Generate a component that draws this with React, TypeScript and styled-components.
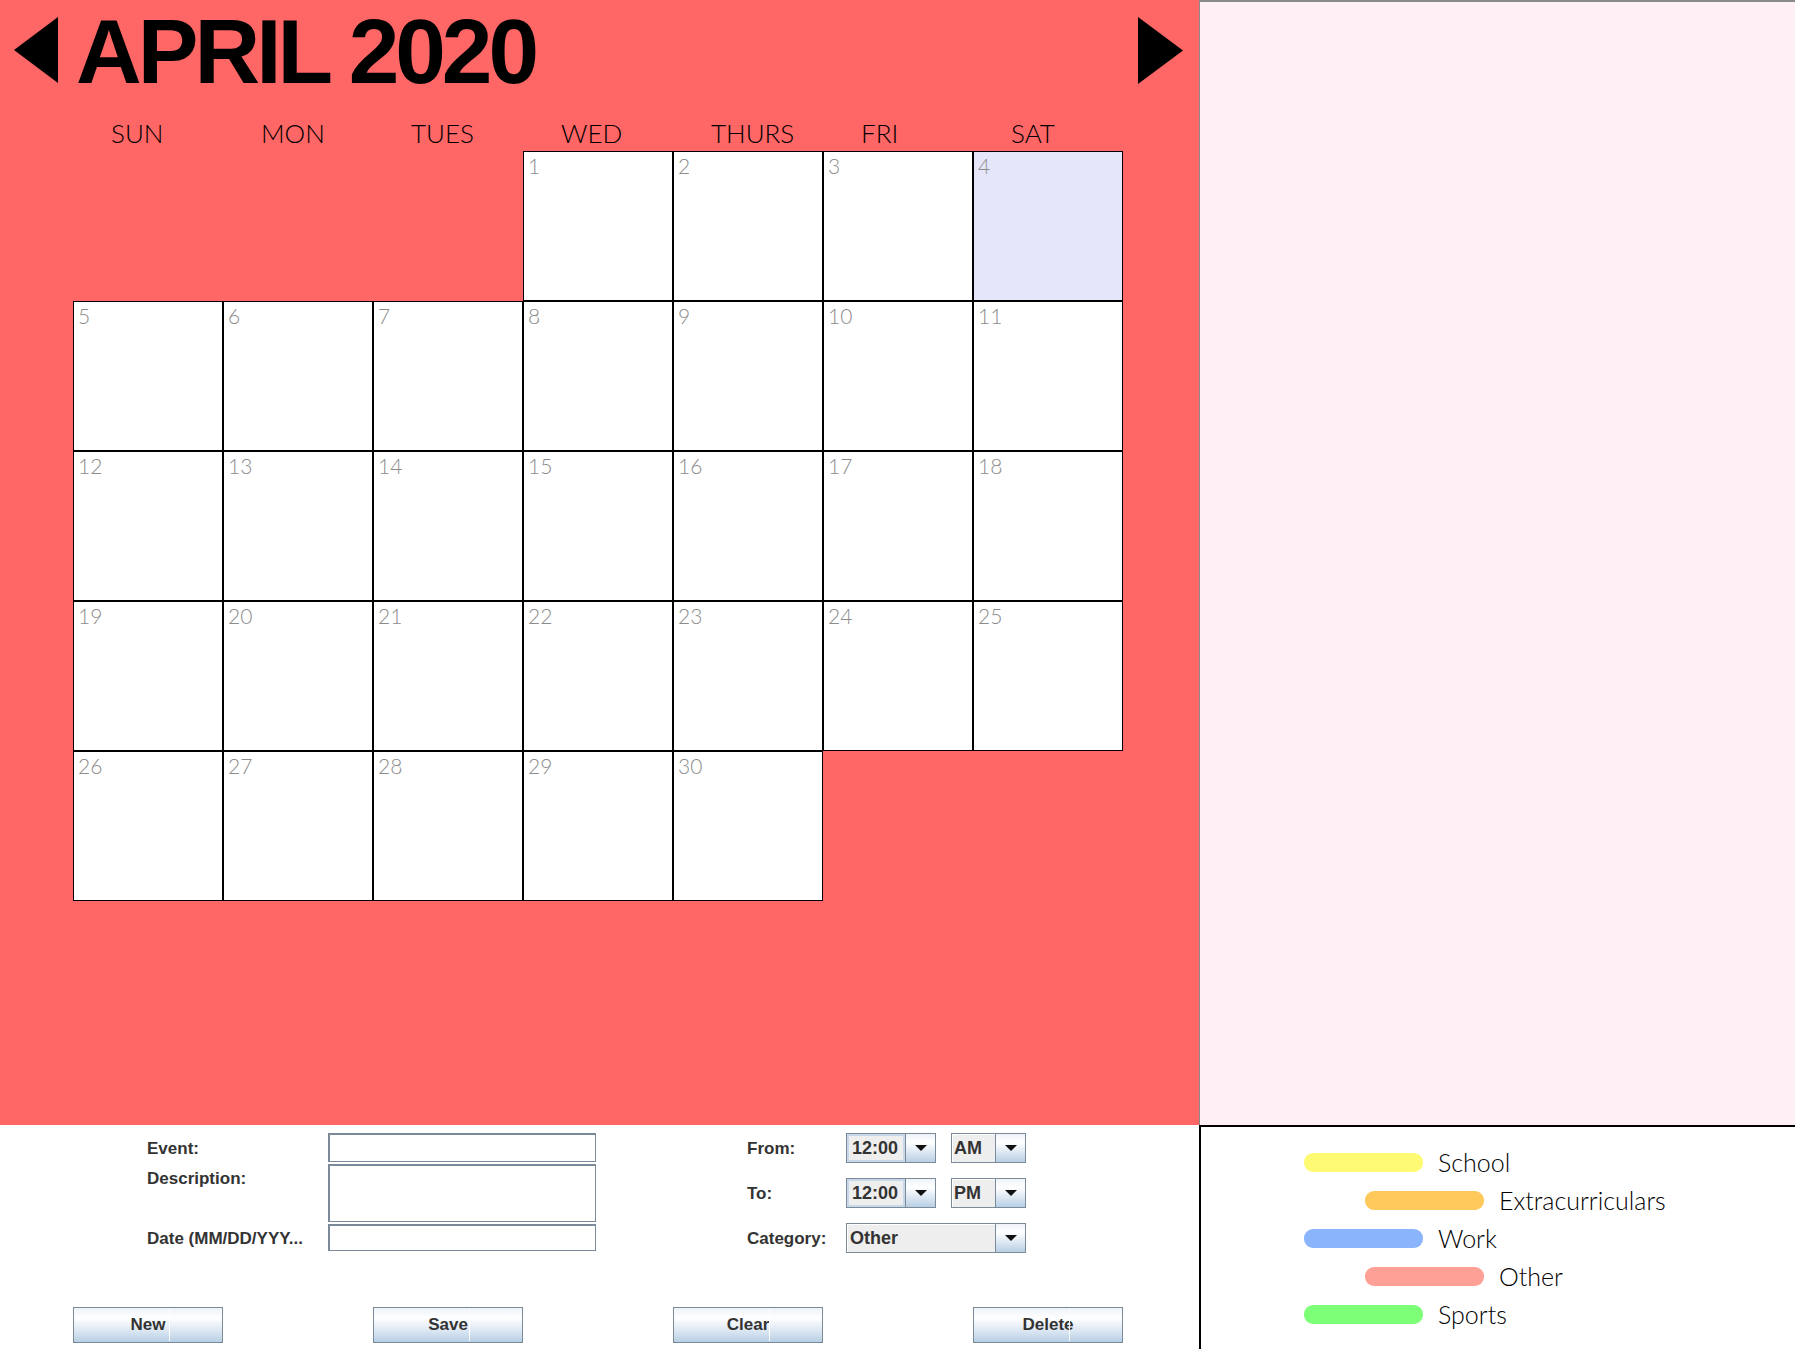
import React from 'react';
import styled, { createGlobalStyle } from 'styled-components';

const GlobalStyle = createGlobalStyle`
  html, body {
    margin: 0;
    padding: 0;
    background: #fff;
  }
  body {
    width: 1795px;
    height: 1349px;
    overflow: hidden;
    font-family: "Liberation Sans", Arial, sans-serif;
  }
`;

const Window = styled.div`
  display: grid;
  grid-template-columns: 1199px 596px;
  grid-template-rows: 1125px 224px;
  width: 1795px;
  height: 1349px;
`;

const CalendarPanel = styled.section`
  display: flex;
  flex-direction: column;
  background: #ff6666;
`;

const Header = styled.header`
  display: flex;
  align-items: center;
  height: 100px;
`;

const NavArrow = styled.svg<{ $side: 'left' | 'right' }>`
  flex: none;
  margin-left: ${(p) => (p.$side === 'left' ? '14px' : 'auto')};
  margin-right: ${(p) => (p.$side === 'right' ? '16px' : '0')};
  cursor: pointer;
`;

const Title = styled.h1`
  margin: 2px 0 0 18px;
  font: 700 91px/1 "Liberation Sans", Arial, sans-serif;
  letter-spacing: -4px;
  color: #000;
`;

const DayRow = styled.div`
  display: grid;
  grid-template-columns: repeat(7, 150px);
  height: 26px;
  margin: 20px 0 0 73px;
`;

const DayName = styled.div`
  padding-left: 38px;
  font: 300 26px/26px Lato, "Open Sans", sans-serif;
  color: #000;
`;

const MonthGrid = styled.div`
  display: grid;
  grid-template-columns: repeat(7, 150px);
  grid-auto-rows: 150px;
  margin: 5px 0 0 73px;
`;

const DayCell = styled.div<{ $start?: number; $today?: boolean }>`
  box-sizing: border-box;
  border: 1px solid #000;
  grid-column-start: ${(p) => p.$start ?? 'auto'};
  background: ${(p) => (p.$today ? '#e6e6fa' : '#fff')};
  padding: 3px 0 0 4px;
  font: 300 21px/21px Lato, "Open Sans", sans-serif;
  color: #8c8c8c;
`;

const SidePanel = styled.aside`
  box-sizing: border-box;
  background: #fff0f5;
  border-top: 2px solid #8a8a8a;
  border-left: 1px solid #8a8a8a;
`;

const FormPanel = styled.section`
  display: flex;
  flex-direction: column;
  padding-top: 8px;
  background: #fff;
`;

const FieldsArea = styled.div`
  display: flex;
  height: 120px;
`;

const LeftFields = styled.div`
  display: grid;
  grid-template-columns: 181px 268px;
  grid-template-rows: 29px 58px 27px;
  row-gap: 2px;
  align-content: start;
  margin-left: 147px;
`;

const RightFields = styled.div`
  display: grid;
  grid-template-columns: 99px auto;
  grid-auto-rows: 30px;
  row-gap: 15px;
  align-content: start;
  align-items: center;
  margin-left: 151px;
`;

const FieldLabel = styled.label<{ $top?: boolean }>`
  align-self: ${(p) => (p.$top ? 'start' : 'center')};
  padding-top: ${(p) => (p.$top ? '5px' : '2px')};
  font: 700 17px/20px "Liberation Sans", Arial, sans-serif;
  color: #333;
  white-space: nowrap;
`;

const TextInput = styled.input`
  box-sizing: border-box;
  width: 268px;
  height: 100%;
  margin: 0;
  padding: 0 4px;
  border: 1px solid #7a8a99;
  box-shadow: inset 1px 1px 0 #7a8a99;
  background: #fff;
  outline: none;
  font: 400 16px "Liberation Sans", Arial, sans-serif;
`;

const TextArea = styled.textarea`
  box-sizing: border-box;
  width: 268px;
  height: 100%;
  margin: 0;
  padding: 2px 4px;
  border: 1px solid #7a8a99;
  box-shadow: inset 1px 1px 0 #7a8a99;
  background: #fff;
  outline: none;
  resize: none;
  font: 400 16px "Liberation Sans", Arial, sans-serif;
`;

const ComboGroup = styled.div`
  display: flex;
  gap: 15px;
`;

const Combo = styled.div<{ $w: number }>`
  box-sizing: border-box;
  display: flex;
  width: ${(p) => p.$w}px;
  height: 30px;
  border: 1px solid #7a8a99;
`;

const ComboValue = styled.div<{ $pad: number; $framed?: boolean }>`
  flex: 1;
  padding-left: ${(p) => p.$pad}px;
  background: #eeeeee;
  box-shadow: ${(p) => (p.$framed ? 'inset 0 0 0 2px #c6d8ea' : 'inset 1px 1px 0 #fff')};
  font: 700 18px/28px "Liberation Sans", Arial, sans-serif;
  color: #333;
`;

const ComboButton = styled.div`
  display: flex;
  align-items: center;
  justify-content: center;
  width: 29px;
  border-left: 1px solid #7a8a99;
  background: linear-gradient(to bottom, #eef3f9 0%, #ffffff 30%, #dde8f3 65%, #b8cfe5 100%);
`;

const DownCaret = styled.span`
  width: 0;
  height: 0;
  border-left: 6px solid transparent;
  border-right: 6px solid transparent;
  border-top: 6px solid #111;
`;

const ButtonRow = styled.div`
  display: grid;
  grid-template-columns: repeat(4, 150px);
  column-gap: 150px;
  margin: 54px 0 0 73px;
`;

const ActionButton = styled.button`
  position: relative;
  box-sizing: border-box;
  height: 36px;
  margin: 0;
  padding: 0;
  border: 1px solid #7a8a99;
  background: linear-gradient(to bottom, #eef3f9 0%, #ffffff 30%, #dde8f3 65%, #b8cfe5 100%);
  font: 700 17px "Liberation Sans", Arial, sans-serif;
  color: #333;

  &::after {
    content: '';
    position: absolute;
    top: 1px;
    bottom: 1px;
    left: 95px;
    width: 1px;
    background: rgba(255, 255, 255, 0.95);
  }
`;

const LegendPanel = styled.aside`
  box-sizing: border-box;
  display: flex;
  flex-direction: column;
  padding-top: 16px;
  background: #fff;
  border-top: 2px solid #000;
  border-left: 2px solid #000;
`;

const LegendRow = styled.div<{ $indent: number }>`
  display: flex;
  align-items: center;
  height: 38px;
  padding-left: ${(p) => p.$indent}px;
`;

const LegendBar = styled.span<{ $color: string }>`
  flex: none;
  width: 119px;
  height: 19px;
  border-radius: 9px;
  background: ${(p) => p.$color};
`;

const LegendText = styled.span`
  margin-left: 15px;
  font: 300 25px/25px Lato, "Open Sans", sans-serif;
  color: #000;
`;

const dayNames = ['SUN', 'MON', 'TUES', 'WED', 'THURS', 'FRI', 'SAT'];

const categories = [
  { label: 'School', color: '#fffa73', indent: 103 },
  { label: 'Extracurriculars', color: '#fec85a', indent: 164 },
  { label: 'Work', color: '#8ab4fc', indent: 103 },
  { label: 'Other', color: '#ffa097', indent: 164 },
  { label: 'Sports', color: '#7dff78', indent: 103 },
];

const days = Array.from({ length: 30 }, (_, i) => i + 1);

const App = () => {
  return (
    <>
      <GlobalStyle />
      <Window>
        <CalendarPanel>
          <Header>
            <NavArrow $side="left" width="44" height="66" viewBox="0 0 44 66">
              <polygon points="44,0 44,66 0,33" fill="#000" />
            </NavArrow>
            <Title>APRIL 2020</Title>
            <NavArrow $side="right" width="45" height="67" viewBox="0 0 45 67">
              <polygon points="0,0 45,33.5 0,67" fill="#000" />
            </NavArrow>
          </Header>

          <DayRow>
            {dayNames.map((d) => (
              <DayName key={d}>{d}</DayName>
            ))}
          </DayRow>

          <MonthGrid>
            {days.map((d) => (
              <DayCell key={d} $start={d === 1 ? 4 : undefined} $today={d === 4}>
                {d}
              </DayCell>
            ))}
          </MonthGrid>
        </CalendarPanel>

        <SidePanel />

        <FormPanel>
          <FieldsArea>
            <LeftFields>
              <FieldLabel>Event:</FieldLabel>
              <TextInput />
              <FieldLabel $top>Description:</FieldLabel>
              <TextArea />
              <FieldLabel>Date (MM/DD/YYY...</FieldLabel>
              <TextInput />
            </LeftFields>

            <RightFields>
              <FieldLabel>From:</FieldLabel>
              <ComboGroup>
                <Combo $w={90}>
                  <ComboValue $pad={5} $framed>12:00</ComboValue>
                  <ComboButton><DownCaret /></ComboButton>
                </Combo>
                <Combo $w={75}>
                  <ComboValue $pad={2}>AM</ComboValue>
                  <ComboButton><DownCaret /></ComboButton>
                </Combo>
              </ComboGroup>

              <FieldLabel>To:</FieldLabel>
              <ComboGroup>
                <Combo $w={90}>
                  <ComboValue $pad={5} $framed>12:00</ComboValue>
                  <ComboButton><DownCaret /></ComboButton>
                </Combo>
                <Combo $w={75}>
                  <ComboValue $pad={2}>PM</ComboValue>
                  <ComboButton><DownCaret /></ComboButton>
                </Combo>
              </ComboGroup>

              <FieldLabel>Category:</FieldLabel>
              <Combo $w={180}>
                <ComboValue $pad={3}>Other</ComboValue>
                <ComboButton><DownCaret /></ComboButton>
              </Combo>
            </RightFields>
          </FieldsArea>

          <ButtonRow>
            <ActionButton>New</ActionButton>
            <ActionButton>Save</ActionButton>
            <ActionButton>Clear</ActionButton>
            <ActionButton>Delete</ActionButton>
          </ButtonRow>
        </FormPanel>

        <LegendPanel>
          {categories.map((c) => (
            <LegendRow key={c.label} $indent={c.indent}>
              <LegendBar $color={c.color} />
              <LegendText>{c.label}</LegendText>
            </LegendRow>
          ))}
        </LegendPanel>
      </Window>
    </>
  );
};

export default App;
